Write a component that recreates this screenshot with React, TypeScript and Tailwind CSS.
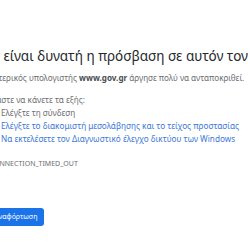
import React from "react";

export default function App() {
  return (
    <div className="w-[250px] h-[242px] overflow-hidden bg-white" style={{ fontFamily: '"Noto Sans", "Open Sans", sans-serif' }}>
      <div className="-ml-[26px] w-[400px] pt-[47px]">
        <h1 className="pl-[4px] text-[13.5px] leading-[18px] text-[#26282b] font-normal whitespace-nowrap">
          Δεν είναι δυνατή η πρόσβαση σε αυτόν τον ιστότοπο
        </h1>
        <p className="mt-[7px] pl-[2px] text-[8.1px] leading-[12px] text-[#6b6e72] whitespace-nowrap">
          Ο εξωτερικός υπολογιστής <b className="font-bold text-[#4a4d51]">www.gov.gr</b> άργησε πολύ να ανταποκριθεί.
        </p>
        <p className="mt-[10px] text-[8.2px] leading-[12px] text-[#6b6e72] whitespace-nowrap">
          Δοκιμάστε να κάνετε τα εξής:
        </p>
        <ul className="pl-[27px] list-disc text-[8.2px] leading-[13px] whitespace-nowrap">
          <li className="text-[#6b6e72]">Ελέγξτε τη σύνδεση</li>
          <li className="text-[#3b78d6]">Ελέγξτε το διακομιστή μεσολάβησης και το τείχος προστασίας</li>
          <li className="text-[#3b78d6]">Να εκτελέσετε τον Διαγνωστικό έλεγχο δικτύου των Windows</li>
        </ul>
        <div className="mt-[14px] text-[7px] leading-[10px] text-[#6b6e72] whitespace-nowrap">
          ERR_CONNECTION_TIMED_OUT
        </div>
        <button className="mt-[39px] ml-[5px] h-[18px] rounded-[3px] bg-[#1a73e8] px-[7px] text-[7px] text-white whitespace-nowrap">
          Επαναφόρτωση
        </button>
      </div>
    </div>
  );
}
